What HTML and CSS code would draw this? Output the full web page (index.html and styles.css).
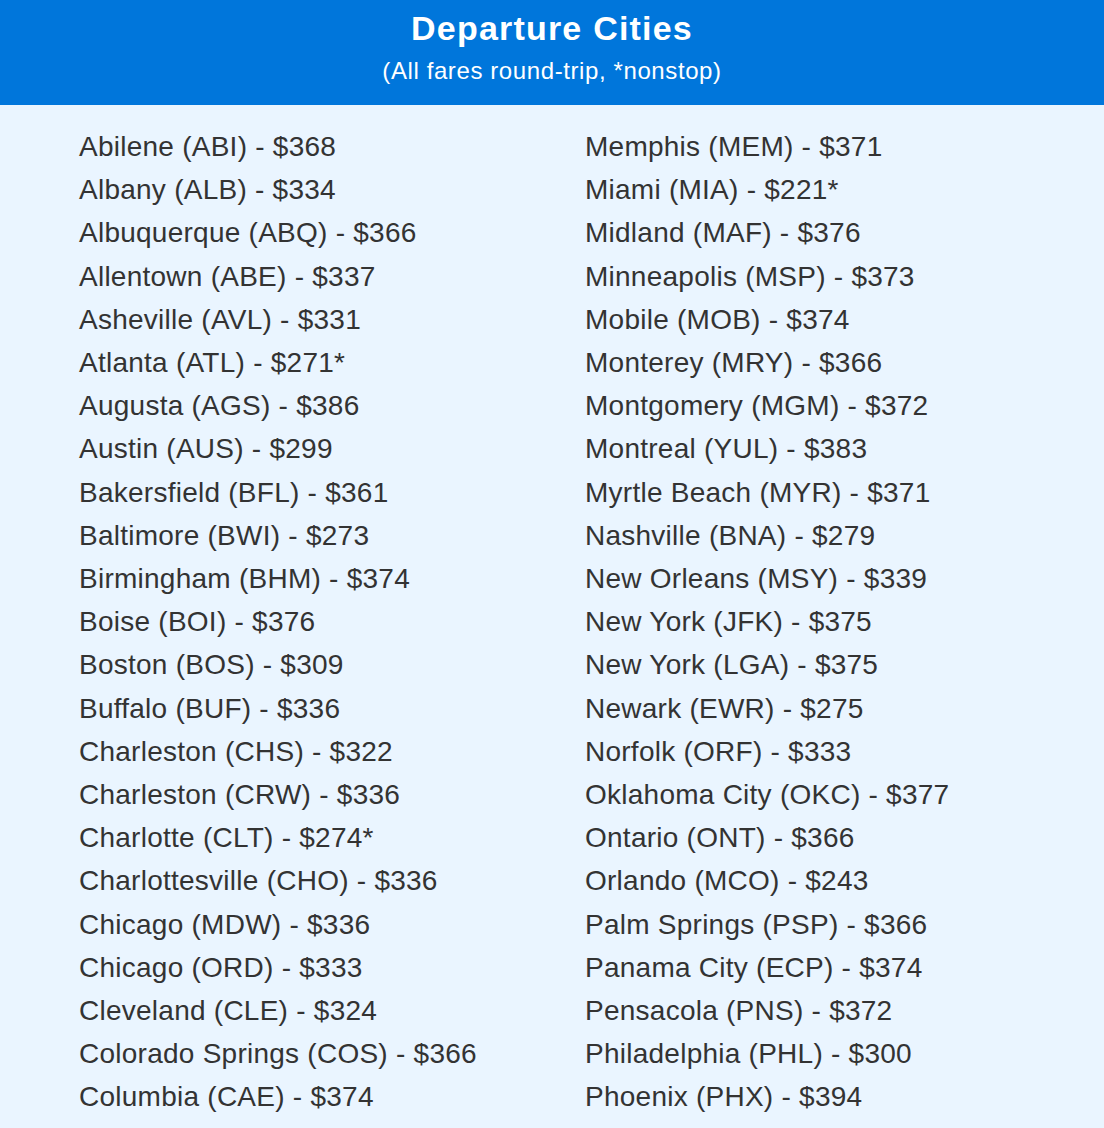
FILE: index.html
```html
<!DOCTYPE html>
<html lang="en">
<head>
<meta charset="utf-8">
<title>Departure Cities</title>
<link rel="stylesheet" href="styles.css">
</head>
<body>
<header class="banner">
  <h1 class="title">Departure Cities</h1>
  <p class="subtitle">(All fares round-trip, *nonstop)</p>
</header>
<main class="cities">
  <ul class="col">
    <li>Abilene (ABI) - $368</li>
    <li>Albany (ALB) - $334</li>
    <li>Albuquerque (ABQ) - $366</li>
    <li>Allentown (ABE) - $337</li>
    <li>Asheville (AVL) - $331</li>
    <li>Atlanta (ATL) - $271*</li>
    <li>Augusta (AGS) - $386</li>
    <li>Austin (AUS) - $299</li>
    <li>Bakersfield (BFL) - $361</li>
    <li>Baltimore (BWI) - $273</li>
    <li>Birmingham (BHM) - $374</li>
    <li>Boise (BOI) - $376</li>
    <li>Boston (BOS) - $309</li>
    <li>Buffalo (BUF) - $336</li>
    <li>Charleston (CHS) - $322</li>
    <li>Charleston (CRW) - $336</li>
    <li>Charlotte (CLT) - $274*</li>
    <li>Charlottesville (CHO) - $336</li>
    <li>Chicago (MDW) - $336</li>
    <li>Chicago (ORD) - $333</li>
    <li>Cleveland (CLE) - $324</li>
    <li>Colorado Springs (COS) - $366</li>
    <li>Columbia (CAE) - $374</li>
    <li>Columbus (CMH) - $345</li>
  </ul>
  <ul class="col">
    <li>Memphis (MEM) - $371</li>
    <li>Miami (MIA) - $221*</li>
    <li>Midland (MAF) - $376</li>
    <li>Minneapolis (MSP) - $373</li>
    <li>Mobile (MOB) - $374</li>
    <li>Monterey (MRY) - $366</li>
    <li>Montgomery (MGM) - $372</li>
    <li>Montreal (YUL) - $383</li>
    <li>Myrtle Beach (MYR) - $371</li>
    <li>Nashville (BNA) - $279</li>
    <li>New Orleans (MSY) - $339</li>
    <li>New York (JFK) - $375</li>
    <li>New York (LGA) - $375</li>
    <li>Newark (EWR) - $275</li>
    <li>Norfolk (ORF) - $333</li>
    <li>Oklahoma City (OKC) - $377</li>
    <li>Ontario (ONT) - $366</li>
    <li>Orlando (MCO) - $243</li>
    <li>Palm Springs (PSP) - $366</li>
    <li>Panama City (ECP) - $374</li>
    <li>Pensacola (PNS) - $372</li>
    <li>Philadelphia (PHL) - $300</li>
    <li>Phoenix (PHX) - $394</li>
    <li>Pittsburgh (PIT) - $361</li>
  </ul>
</main>
</body>
</html>
```
FILE: styles.css
```css
html, body {
  margin: 0;
  padding: 0;
}
body {
  background: #eaf5ff;
  font-family: "Liberation Sans", Arial, Helvetica, sans-serif;
  color: #333333;
}
.banner {
  background: #0076db;
  color: #ffffff;
  text-align: center;
  padding: 8px 0 19px;
}
.title {
  margin: 0;
  font-size: 34px;
  line-height: 40px;
  font-weight: bold;
  letter-spacing: 1.2px;
}
.subtitle {
  margin: 8px 0 0;
  font-size: 24px;
  line-height: 30px;
  letter-spacing: 0.6px;
}
.cities {
  display: grid;
  grid-template-columns: 506px 1fr;
  padding: 20px 0 0 79px;
}
.col {
  list-style: none;
  margin: 0;
  padding: 0;
}
.col li {
  font-size: 28px;
  line-height: 43.2px;
  letter-spacing: 0.25px;
  white-space: nowrap;
}
```
